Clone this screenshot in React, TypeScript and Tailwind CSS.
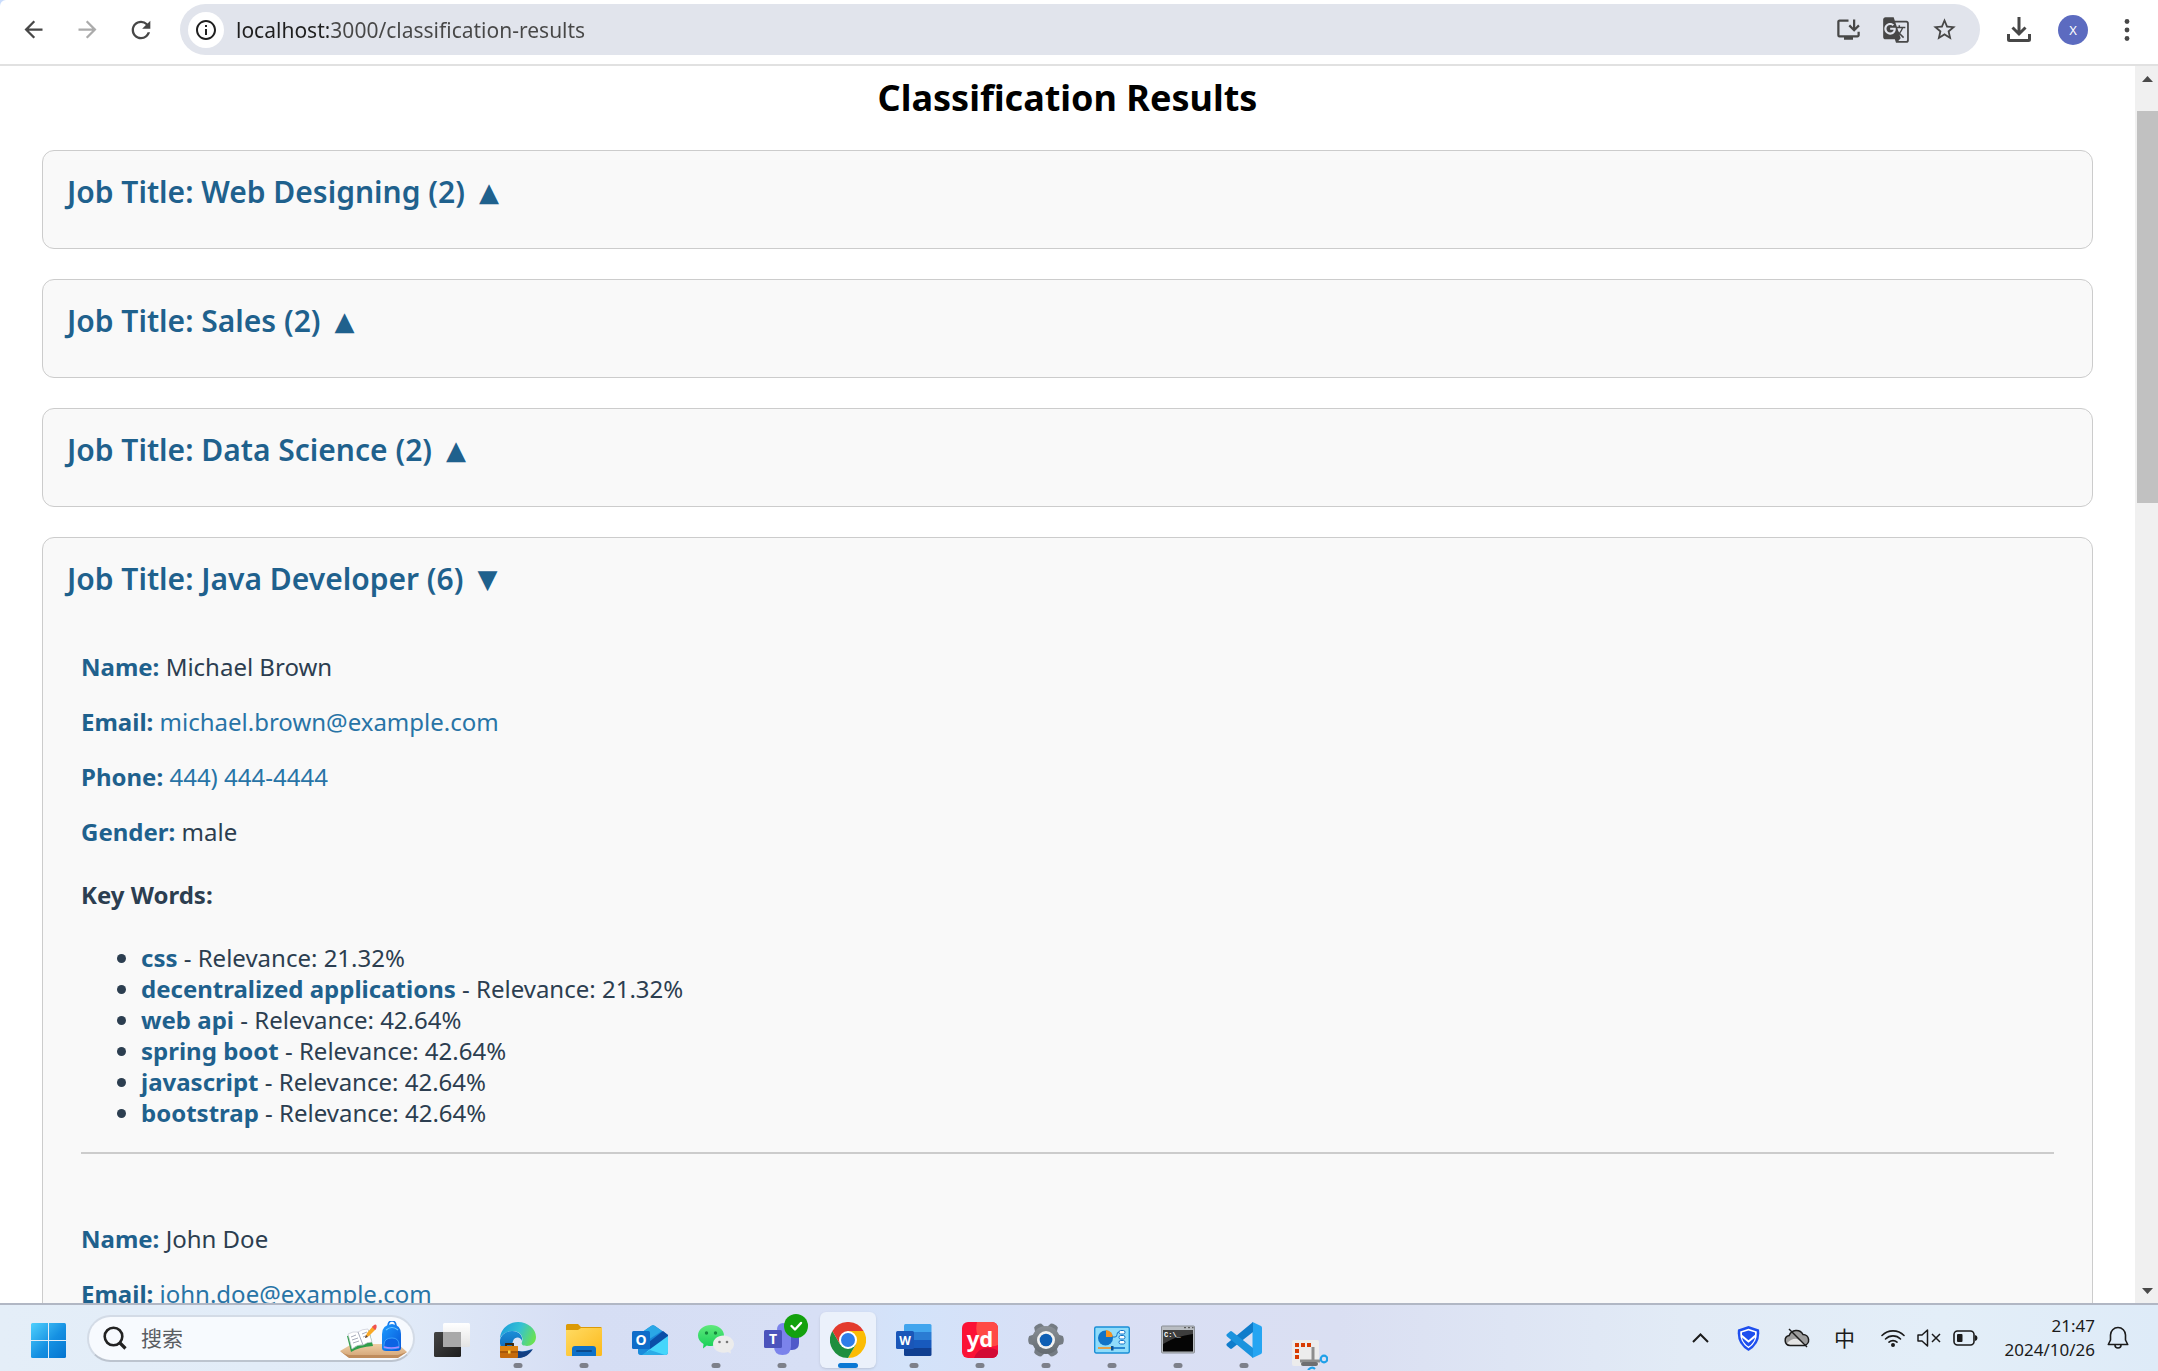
import { useState, type ReactNode } from "react";
import {
  MdArrowBack,
  MdArrowForward,
  MdGTranslate,
  MdInfoOutline,
  MdInstallDesktop,
  MdRefresh,
  MdStarBorder,
} from "react-icons/md";

type Keyword = { word: string; relevance: string };
type Candidate = {
  name: string;
  email: string;
  phone: string;
  gender: string;
  keywords: Keyword[];
};
type Group = { title: string; count: number; candidates: Candidate[] };

const groups: Group[] = [
  { title: "Web Designing", count: 2, candidates: [] },
  { title: "Sales", count: 2, candidates: [] },
  { title: "Data Science", count: 2, candidates: [] },
  {
    title: "Java Developer",
    count: 6,
    candidates: [
      {
        name: "Michael Brown",
        email: "michael.brown@example.com",
        phone: "444) 444-4444",
        gender: "male",
        keywords: [
          { word: "css", relevance: "21.32%" },
          { word: "decentralized applications", relevance: "21.32%" },
          { word: "web api", relevance: "42.64%" },
          { word: "spring boot", relevance: "42.64%" },
          { word: "javascript", relevance: "42.64%" },
          { word: "bootstrap", relevance: "42.64%" },
        ],
      },
      {
        name: "John Doe",
        email: "john.doe@example.com",
        phone: "",
        gender: "",
        keywords: [],
      },
    ],
  },
];

/* ---------- Browser toolbar ---------- */

function IconButton({ label, className = "", children }: { label: string; className?: string; children: ReactNode }) {
  return (
    <button
      type="button"
      aria-label={label}
      className={`flex shrink-0 items-center justify-center ${className}`}
    >
      {children}
    </button>
  );
}

function BrowserBar() {
  return (
    <header className="shrink-0 border-b-2 border-[#e1e1e1] bg-[#c9dcfc]">
      <div className="flex h-16 items-center rounded-tl-md bg-white pt-1 pb-[9px] pl-[6px]">
        <IconButton label="Back" className="h-[51px] w-[54px] text-[#474747]">
          <MdArrowBack size={27} />
        </IconButton>
        <IconButton label="Forward" className="h-[51px] w-[54px] text-[#ababab]">
          <MdArrowForward size={27} />
        </IconButton>
        <IconButton label="Reload" className="h-[51px] w-[54px] text-[#474747]">
          <MdRefresh size={28} />
        </IconButton>
        <div className="ml-3 flex h-[51px] min-w-0 flex-1 items-center rounded-full bg-[#e1e4ec] pr-3 pl-2">
          <IconButton label="View site information" className="size-9 rounded-full bg-white text-[#1f1f1f]">
            <MdInfoOutline size={24} />
          </IconButton>
          <input
            type="text"
            aria-label="Address"
            defaultValue="localhost:3000/classification-results"
            className="ml-3 min-w-0 flex-1 bg-[linear-gradient(90deg,#1f1f1f_92px,#474747_92px)] bg-clip-text text-[21px] leading-8 text-transparent caret-black outline-none"
          />
          <IconButton label="Install app" className="h-9 w-12 text-[#474747]">
            <MdInstallDesktop size={27} />
          </IconButton>
          <IconButton label="Translate this page" className="h-9 w-12 text-[#474747]">
            <MdGTranslate size={28} />
          </IconButton>
          <IconButton label="Bookmark this page" className="h-9 w-12 text-[#474747]">
            <MdStarBorder size={27} />
          </IconButton>
        </div>
        <IconButton label="Downloads" className="ml-3 h-9 w-[54px] text-[#474747]">
          <svg width="24" height="25" viewBox="0 0 24 25" fill="none" stroke="currentColor" strokeWidth="3">
            <path d="M12 0v16M5.500 10.500 12 17l6.500-6.500" />
            <path d="M1.500 17v5.500a1 1 0 0 0 1 1h19a1 1 0 0 0 1-1V17" />
          </svg>
        </IconButton>
        <IconButton label="Profile" className="h-9 w-[54px]">
          <span className="flex size-[30px] items-center justify-center rounded-full bg-[#5c6bc0] text-[13px] leading-4 text-white">
            X
          </span>
        </IconButton>
        <IconButton label="Browser menu" className="mr-1 h-9 w-[54px] text-[#474747]">
          <svg width="6" height="24" viewBox="0 0 6 24" fill="currentColor">
            <circle cx="3" cy="3.500" r="2.400" />
            <circle cx="3" cy="12" r="2.400" />
            <circle cx="3" cy="20.500" r="2.400" />
          </svg>
        </IconButton>
      </div>
    </header>
  );
}

/* ---------- Page ---------- */

function CandidateDetails({ c }: { c: Candidate }) {
  return (
    <article className="mt-[52px] px-[14px] text-2xl leading-[31px] text-[#2c3e50]">
      <div className="flex flex-col gap-6">
        <p>
          <strong className="text-[#1f618d]">Name:</strong> {c.name}
        </p>
        <p>
          <strong className="text-[#1f618d]">Email:</strong>{" "}
          <a href={`mailto:${c.email}`} className="text-[#2874a6]">
            {c.email}
          </a>
        </p>
        {c.phone && (
          <p>
            <strong className="text-[#1f618d]">Phone:</strong>{" "}
            <a href={`tel:${c.phone}`} className="text-[#2874a6]">
              {c.phone}
            </a>
          </p>
        )}
        {c.gender && (
          <p>
            <strong className="text-[#1f618d]">Gender:</strong> {c.gender}
          </p>
        )}
      </div>
      {c.keywords.length > 0 && (
        <>
          <h3 className="my-8 font-bold">Key Words:</h3>
          <ul className="list-disc pl-[60px]">
            {c.keywords.map((k) => (
              <li key={k.word}>
                <strong className="text-[#1f618d]">{k.word}</strong> - Relevance: {k.relevance}
              </li>
            ))}
          </ul>
        </>
      )}
      <hr className="mt-6 mb-[69px] border-t-2 border-[#cccccc]" />
    </article>
  );
}

function JobGroup({ group, initiallyOpen }: { group: Group; initiallyOpen: boolean }) {
  const [open, setOpen] = useState(initiallyOpen);
  return (
    <section className="rounded-xl border border-[#cccccc] bg-[#f9f9f9] px-6 pt-[21px] pb-9">
      <h2 className="text-3xl leading-10 font-semibold text-[#1f618d]">
        <button
          type="button"
          aria-expanded={open}
          onClick={() => setOpen(!open)}
          className="flex items-center gap-[14px] text-left"
        >
          <span>
            Job Title: {group.title} ({group.count})
          </span>
          <span className="font-['DejaVu_Sans',sans-serif] text-[26px] leading-8 font-normal">
            {open ? "▼" : "▲"}
          </span>
        </button>
      </h2>
      {open && group.candidates.map((c) => <CandidateDetails key={c.name} c={c} />)}
    </section>
  );
}

function ScrollBar() {
  return (
    <div className="flex w-[23px] shrink-0 flex-col items-center bg-[#f0f0f0] pt-[10px] pb-[9px] pl-[2px]">
      <svg width="11" height="6" viewBox="0 0 11 6" fill="#4a4a4a">
        <path d="M5.500 0 11 6H0Z" />
      </svg>
      <div className="mt-[29px] mb-auto h-[392px] w-full bg-[#c1c1c1]" />
      <svg width="11" height="6" viewBox="0 0 11 6" fill="#4a4a4a">
        <path d="M5.500 6 11 0H0Z" />
      </svg>
    </div>
  );
}

/* ---------- Taskbar icons ---------- */

function StartIcon() {
  return (
    <svg width="35" height="35" viewBox="0 0 35 35">
      <defs>
        <linearGradient id="win" x1="0" y1="0" x2="35" y2="35" gradientUnits="userSpaceOnUse">
          <stop offset="0" stopColor="#4fd0fd" />
          <stop offset=".55" stopColor="#1590e2" />
          <stop offset="1" stopColor="#0474cf" />
        </linearGradient>
      </defs>
      <g fill="url(#win)">
        <path d="M1.500 0H17v17H0V1.500A1.500 1.500 0 0 1 1.500 0Z" />
        <path d="M18 0h15.500A1.500 1.500 0 0 1 35 1.500V17H18Z" />
        <path d="M0 18h17v17H1.500A1.500 1.500 0 0 1 0 33.500Z" />
        <path d="M18 18h17v15.500a1.500 1.500 0 0 1-1.500 1.500H18Z" />
      </g>
    </svg>
  );
}

function SearchArt() {
  return (
    <svg width="67" height="38" viewBox="0 0 67 38" className="mt-[3px]">
      <defs>
        <linearGradient id="bag" x1="0" y1="0" x2="1" y2="1">
          <stop offset="0" stopColor="#1d9bff" />
          <stop offset="1" stopColor="#0756d8" />
        </linearGradient>
        <linearGradient id="table" x1="0" y1="0" x2="0" y2="1">
          <stop offset="0" stopColor="#efcfa6" />
          <stop offset="1" stopColor="#d3a476" />
        </linearGradient>
      </defs>
      <path d="M0 30 12 23h46l9 8-9 5H8Z" fill="url(#table)" />
      <path d="M0 30q4 3 9 4h49l9-3-9 6H9Z" fill="#bf8c5c" />
      <path d="m7 15 4 16q8-5 22-6l-4-16Z" fill="#2f9e4a" />
      <path d="m8 13 4 15q6-5 11-4 4-3 9-3L28 8q-6 0-10 3-5-1-10 2Z" fill="#fff" stroke="#c5c9d4" strokeWidth=".7" />
      <path d="m18 11 5 13M11 16l5-2M12 19l6-2M13 22l6-2M22 13l5-2M23 16l5-2" stroke="#8f96a8" strokeWidth=".8" fill="none" />
      <path d="m25 17 2-5 6-7 3 3-7 7Z" fill="#f9a825" />
      <path d="m25 17 1-3 2 2Z" fill="#5d4037" />
      <path d="m32 6 2-2q2-1 2.500.500T36 8l-1 1Z" fill="#ef5350" />
      <path d="M48 6q0-6 4-6t4 6" fill="none" stroke="#1277e8" strokeWidth="1.600" />
      <path d="M42 13q0-9 10-10 9 1 9 10v14q0 3-4 3H46q-4 0-4-3Z" fill="url(#bag)" />
      <path d="M46 9q6-5 12 0" stroke="#68c6ff" strokeWidth="1.200" fill="none" />
      <path d="M44 24q0-7 8-7 7 0 7 7v3q-7 2-15 0Z" fill="#0c63e4" stroke="#4cb2ff" strokeWidth=".7" />
      <path d="M44 26q7 2 15 0" stroke="#a98bff" strokeWidth="1.600" fill="none" />
    </svg>
  );
}

function TaskViewIcon() {
  return (
    <svg width="36" height="36" viewBox="0 0 36 36">
      <defs>
        <linearGradient id="tvd" x1="0" y1="0" x2="1" y2="1">
          <stop offset="0" stopColor="#444" />
          <stop offset="1" stopColor="#1e1e1e" />
        </linearGradient>
        <linearGradient id="tvl" x1="0" y1="0" x2="0" y2="1">
          <stop offset="0" stopColor="#fff" />
          <stop offset="1" stopColor="#e4e4e4" />
        </linearGradient>
      </defs>
      <rect x="0" y="10" width="27" height="25" rx="1.500" fill="url(#tvd)" />
      <rect x="9" y="1" width="27" height="24" rx="1.500" fill="url(#tvl)" />
      <path d="M9 10h18v15H10.500A1.500 1.500 0 0 1 9 23.500Z" fill="#a9a9a9" />
    </svg>
  );
}

function EdgeIcon() {
  return (
    <svg width="36" height="36" viewBox="0 0 36 36">
      <defs>
        <linearGradient id="edgeTop" x1="0" y1=".3" x2="1" y2=".6">
          <stop offset="0" stopColor="#1c9fdc" />
          <stop offset=".5" stopColor="#35c1d3" />
          <stop offset="1" stopColor="#6be24f" />
        </linearGradient>
        <linearGradient id="edgeMid" x1="0" y1="0" x2="0" y2="1">
          <stop offset="0" stopColor="#1b8fd8" />
          <stop offset="1" stopColor="#0c56a8" />
        </linearGradient>
      </defs>
      <path d="M0 17C0 8 8 0 18 0s18 7 18 15c0 6-5 9-9 9-5 0-6-2-5-4 2-5-2-11-9-11C6 9 1 13 0 17Z" fill="url(#edgeTop)" />
      <path d="M0 18c1-5 6-9 12-9 7 0 11 5 10 10-1-4-7-5-9 0-3 8 5 14 19 8-3 5-8 9-14 9C7 36-1 28 0 18Z" fill="url(#edgeMid)" />
      <path d="M13 21c-1 7 8 12 20 6-3 5-8 9-15 9Z" fill="#123f83" />
      <path d="M6 24v-2h7v2" fill="none" stroke="#3b2508" strokeWidth="1.800" />
      <rect x="0" y="24" width="18" height="12" rx="1" fill="#c56a0b" />
      <path d="M0 25a1 1 0 0 1 1-1h16a1 1 0 0 1 1 1v4H0Z" fill="#dd8312" />
      <path d="M0 30h18" stroke="#8a4706" strokeWidth="1" />
      <rect x="8" y="28.500" width="2.500" height="3" fill="#ffd84a" />
    </svg>
  );
}

function FolderIcon() {
  return (
    <svg width="36" height="36" viewBox="0 0 36 36">
      <defs>
        <linearGradient id="fold" x1="0" y1="0" x2="1" y2="1">
          <stop offset="0" stopColor="#ffdb63" />
          <stop offset="1" stopColor="#fcb91b" />
        </linearGradient>
      </defs>
      <path d="M0 3.500A1.500 1.500 0 0 1 1.500 2H12l3 3h19.500A1.500 1.500 0 0 1 36 6.500V12H0Z" fill="#dc9a06" />
      <path d="M0 8h12l3-2h21v26.500a1.500 1.500 0 0 1-1.500 1.500h-33A1.500 1.500 0 0 1 0 32.500Z" fill="url(#fold)" />
      <path d="M6 34v-7a3 3 0 0 1 3-3h18a3 3 0 0 1 3 3v7Z" fill="#0e71c8" />
      <path d="M11 29h14" stroke="#0a4a8c" strokeWidth="2" strokeLinecap="round" />
    </svg>
  );
}

function OutlookIcon() {
  return (
    <svg width="36" height="36" viewBox="0 0 36 36">
      <path d="m6 13 13-9q2-1.500 4 0l13 9v17q0 3-3 3H9q-3 0-3-3Z" fill="#1a86d8" />
      <path d="m6 13 13-9q2-1.500 4 0l7 5-22 14Z" fill="#2aa7e6" />
      <path d="m17 20 14-11 5 4v4L18 29Z" fill="#0b4fa8" />
      <path d="M36 14v16q0 3-3 3H10Z" fill="#45d6fb" />
      <path d="m6 22 9 8 3-2 15 5H9q-3 0-3-3Z" fill="#1b8fdc" opacity=".6" />
      <rect x="0" y="9" width="18" height="18" rx="1.500" fill="#0f6cc9" />
      <text x="9" y="23" textAnchor="middle" fontSize="14" fontWeight="700" fill="#fff">
        O
      </text>
    </svg>
  );
}

function WeChatIcon() {
  return (
    <svg width="36" height="36" viewBox="0 0 36 36">
      <defs>
        <linearGradient id="wx" x1="0" y1="0" x2="0" y2="1">
          <stop offset="0" stopColor="#5fe87b" />
          <stop offset="1" stopColor="#14cf57" />
        </linearGradient>
      </defs>
      <path d="M13 3c7 0 13 4.500 13 10.500S20 24 13 24c-1.500 0-3-.2-4.200-.6L5 26.500l.5-4.500C2 20 0 17 0 13.500 0 7.500 6 3 13 3Z" fill="url(#wx)" />
      <circle cx="8.500" cy="11" r="1.700" fill="#148a3d" />
      <circle cx="17.500" cy="11" r="1.700" fill="#148a3d" />
      <path d="M25.500 13.500c6 0 10.500 4 10.500 8.700 0 2.500-1.400 4.800-3.500 6.400l.4 3-3-1.700c-1.300.4-2.800.8-4.400.8-6 0-10.500-3.800-10.500-8.500s4.500-8.700 10.500-8.700Z" fill="#ececec" />
      <circle cx="21.500" cy="20" r="1.300" fill="#777" />
      <circle cx="29" cy="20" r="1.300" fill="#777" />
    </svg>
  );
}

function TeamsIcon() {
  return (
    <svg width="44" height="44" viewBox="0 0 44 44" className="-mt-2 ml-2">
      <circle cx="19" cy="15" r="6" fill="#7b83eb" />
      <path d="M24 18h11v11q0 7-7 7h-4Z" fill="#5059c9" />
      <path d="M10 19h17v13q0 9-8.500 9T10 32Z" fill="#7b83eb" />
      <rect x="0" y="16" width="18" height="18" rx="1.500" fill="#4b53bc" />
      <text x="9" y="30" textAnchor="middle" fontSize="14" fontWeight="700" fill="#fff">
        T
      </text>
      <circle cx="32" cy="12" r="12" fill="#13a10e" />
      <path d="m27.500 12 3.500 3.500 6-6.500" fill="none" stroke="#fff" strokeWidth="2.400" strokeLinecap="round" strokeLinejoin="round" />
    </svg>
  );
}

function ChromeIcon() {
  return (
    <svg width="36" height="36" viewBox="0 0 36 36">
      <path d="M18 9h15.600A18 18 0 0 1 18 36l7.800-13.500Z" fill="#fbbc04" />
      <path d="M2.400 9A18 18 0 0 0 18 36l7.800-13.500H10.200Z" fill="#1e8e3e" />
      <path d="M2.400 9A18 18 0 0 1 33.600 9H18l-7.800 13.500Z" fill="#e33b2e" />
      <circle cx="18" cy="18" r="9" fill="#fff" />
      <circle cx="18" cy="18" r="7" fill="#2f7de9" />
    </svg>
  );
}

function WordIcon() {
  return (
    <svg width="36" height="36" viewBox="0 0 36 36">
      <path d="M8 3.500A1.500 1.500 0 0 1 9.500 2h24.500A1.500 1.500 0 0 1 35.500 3.500V10H8Z" fill="#41a5ee" />
      <path d="M8 10h27.500v8H8Z" fill="#2b7cd3" />
      <path d="M8 18h27.500v8H8Z" fill="#185abd" />
      <path d="M8 26h27.500v6.500A1.500 1.500 0 0 1 34 34H9.500A1.500 1.500 0 0 1 8 32.500Z" fill="#103f91" />
      <rect x="0" y="9" width="18" height="18" rx="1.500" fill="#1a56b8" />
      <text x="9" y="22.500" textAnchor="middle" fontSize="12" fontWeight="700" fill="#fff">
        W
      </text>
    </svg>
  );
}

function YoudaoIcon() {
  return (
    <svg width="36" height="36" viewBox="0 0 36 36">
      <rect width="36" height="36" rx="6" fill="#fb1236" />
      <path d="M15 0h15a6 6 0 0 1 6 6v17Q30 26 22 22 12 14 15 0Z" fill="#ff4a45" />
      <path d="M12 36q4-10 13-10 8 0 11 3v1a6 6 0 0 1-6 6Z" fill="#d20a35" />
      <text x="18" y="25" textAnchor="middle" fontSize="22" fontWeight="700" fill="#fff">
        yd
      </text>
    </svg>
  );
}

function SettingsIcon() {
  const teeth = [30, 90, 150, 210, 270, 330];
  return (
    <svg width="36" height="36" viewBox="0 0 36 36">
      <defs>
        <linearGradient id="gear" x1="0" y1="0" x2="0" y2="1">
          <stop offset="0" stopColor="#8a9096" />
          <stop offset="1" stopColor="#636a70" />
        </linearGradient>
      </defs>
      <g fill="#757c83">
        {teeth.map((a) => (
          <path key={a} d="M12.500 6 14 1.200Q18-.8 22 1.200L23.500 6Z" transform={`rotate(${a} 18 18)`} />
        ))}
      </g>
      <circle cx="18" cy="18" r="14" fill="url(#gear)" />
      <circle cx="18" cy="18" r="9" fill="#f2f2f2" />
      <circle cx="18" cy="18" r="6.300" fill="#0f5fb4" />
    </svg>
  );
}

function ControlPanelIcon() {
  return (
    <svg width="36" height="36" viewBox="0 0 36 36">
      <rect x=".7" y="5" width="34.600" height="26" rx="1.500" fill="#8fdcfa" stroke="#1a8fd6" strokeWidth="1.400" />
      <circle cx="11.500" cy="16" r="7.500" fill="#1173c7" />
      <path d="M12 15V8a7.500 7.500 0 0 1 7 7Z" fill="#f7931e" />
      <path d="M18 15h3q2 0 2-2.500T25 10" fill="none" stroke="#1173c7" strokeWidth="1" />
      <g fill="#fff" stroke="#1173c7" strokeWidth="1">
        <rect x="25" y="8.500" width="6" height="3.500" rx="1.700" />
        <rect x="25" y="13.500" width="6" height="3.500" rx="1.700" />
        <rect x="25" y="18.500" width="6" height="3.500" rx="1.700" />
      </g>
      <path d="M4 26h14" stroke="#f7931e" strokeWidth="1.600" />
      <path d="M18 26h13" stroke="#1173c7" strokeWidth="1.600" />
      <rect x="17" y="24" width="2.500" height="4.500" fill="#0b5394" />
    </svg>
  );
}

function TerminalIcon() {
  return (
    <svg width="36" height="36" viewBox="0 0 36 36">
      <rect x="1.500" y="4" width="33" height="27" rx="1" fill="#b9bdc2" stroke="#8b9096" strokeWidth="1" />
      <path d="M24 5.700h2M28 5.700h2M32 5.700h1.500" stroke="#444" strokeWidth="1" />
      <rect x="3" y="8" width="30" height="21.500" fill="#050505" />
      <path d="M3 8h30v4Q16 14 3 22Z" fill="#3d3d3d" />
      <text x="4" y="15" fontSize="7" fontWeight="700" fill="#fff" className="font-['Liberation_Mono',monospace]">
        C:\_
      </text>
    </svg>
  );
}

function VsCodeIcon() {
  return (
    <svg width="36" height="36" viewBox="0 0 36 36">
      <path d="M26.500 0 35 4q1 .5 1 2v24q0 1.500-1 2l-8.500 4Z" fill="#25a5f2" />
      <path d="M27 0v10L6 26.500q-1 .8-2 0l-3-2.600q-1.200-1.200 0-2.300Z" fill="#0f7ccb" />
      <path d="M27 36V26L6 9.500q-1-.8-2 0l-3 2.600q-1.200 1.200 0 2.300Z" fill="#1a93de" />
    </svg>
  );
}

function SnipIcon() {
  return (
    <svg width="36" height="30" viewBox="0 0 36 30">
      <rect x="0" y="0" width="27" height="26" rx="2" fill="#ececec" />
      <path d="M3 5h17" stroke="#d83b01" strokeWidth="4" strokeDasharray="4 2" />
      <path d="M5 9v12" stroke="#d83b01" strokeWidth="4" strokeDasharray="4 2" />
      <path d="M21 7v14M8 21h20" stroke="#8d8d8d" strokeWidth="3" fill="none" />
      <rect x="9" y="22" width="17" height="4" rx="2" fill="#6e6e70" />
      <circle cx="32" cy="19" r="3.300" fill="none" stroke="#1fa0e8" strokeWidth="2.200" />
      <path d="M16 30q4-4 7-1" fill="none" stroke="#1fa0e8" strokeWidth="2.200" />
    </svg>
  );
}

type TaskbarApp = { name: string; icon: ReactNode; running?: boolean; active?: boolean };

const apps: TaskbarApp[] = [
  { name: "Task View", icon: <TaskViewIcon /> },
  { name: "Edge", icon: <EdgeIcon />, running: true },
  { name: "File Explorer", icon: <FolderIcon />, running: true },
  { name: "Outlook", icon: <OutlookIcon /> },
  { name: "WeChat", icon: <WeChatIcon />, running: true },
  { name: "Teams", icon: <TeamsIcon />, running: true },
  { name: "Chrome", icon: <ChromeIcon />, running: true, active: true },
  { name: "Word", icon: <WordIcon />, running: true },
  { name: "Youdao Dictionary", icon: <YoudaoIcon />, running: true },
  { name: "Settings", icon: <SettingsIcon />, running: true },
  { name: "Control Panel", icon: <ControlPanelIcon />, running: true },
  { name: "Command Prompt", icon: <TerminalIcon />, running: true },
  { name: "Visual Studio Code", icon: <VsCodeIcon />, running: true },
];

function TaskButton({ app }: { app: TaskbarApp }) {
  return (
    <button
      type="button"
      aria-label={app.name}
      className={`relative mx-[5px] flex size-14 shrink-0 items-center justify-center rounded-md ${
        app.active ? "bg-[#ebf1fb] shadow-sm" : ""
      }`}
    >
      {app.icon}
      {app.running && (
        <span
          className={`absolute bottom-0 left-1/2 h-[5px] -translate-x-1/2 rounded-full ${
            app.active ? "w-5 bg-[#0a78d4]" : "w-[9px] bg-[#7d808a]"
          }`}
        />
      )}
    </button>
  );
}

function Tray() {
  return (
    <div className="ml-auto flex items-center pr-[29px] text-[#1b1b1b]">
      <IconButton label="Show hidden icons" className="h-12 w-12">
        <svg width="17" height="10" viewBox="0 0 17 10" fill="none" stroke="currentColor" strokeWidth="2">
          <path d="m1 9 7.500-7.500L16 9" />
        </svg>
      </IconButton>
      <IconButton label="Security" className="h-12 w-12">
        <svg width="23" height="25" viewBox="0 0 23 25">
          <path d="M11.500 0 22 3.500Q24 18 11.500 25-1 18 1 3.500Z" fill="#1f4fee" />
          <path d="M11.500 2.800 19.800 5.500Q20.500 16.500 11.500 22.300 2.500 16.500 3.200 5.500Z" fill="#fff" />
          <path d="M11.500 4.500 18 6.600v2.200l-6.500 5.400L5 8.800V6.600Z" fill="#1f4fee" />
          <path d="M5 11.500l6.500 5.300 6.500-5.300q-.8 5.300-6.500 9-5.700-3.700-6.500-9Z" fill="#1f4fee" />
        </svg>
      </IconButton>
      <IconButton label="Cloud sync off" className="h-12 w-12">
        <svg width="26" height="20" viewBox="0 0 26 20">
          <path d="M6 17.500a5 5 0 0 1-.8-9.900A7.500 7.500 0 0 1 19 6.500a5.600 5.600 0 0 1 1.500 11Z" fill="#9d9d9d" />
          <path d="M2 16q6-6 11-5 5 2 9 6H6Z" fill="#e4e4e4" />
          <path d="M6 17.500a5 5 0 0 1-.8-9.900A7.500 7.500 0 0 1 19 6.500a5.600 5.600 0 0 1 1.500 11Z" fill="none" stroke="#1b1b1b" strokeWidth="1.500" />
          <path d="m5 1 18 18" stroke="#1b1b1b" strokeWidth="1.500" />
        </svg>
      </IconButton>
      <button type="button" aria-label="Input method" className="h-12 w-12 text-[21px] leading-8">
        中
      </button>
      <IconButton label="Network, sound and battery" className="ml-3 h-12 gap-3">
        <svg width="24" height="18" viewBox="0 0 24 18" fill="none" stroke="currentColor" strokeWidth="1.600" strokeLinecap="round">
          <path d="M1 6.500a15.500 15.500 0 0 1 22 0" />
          <path d="M4.500 10a10.500 10.500 0 0 1 15 0" />
          <path d="M8 13.200a5.800 5.800 0 0 1 8 0" />
          <circle cx="12" cy="16" r="1.200" fill="currentColor" />
        </svg>
        <svg width="24" height="18" viewBox="0 0 24 18" fill="none" stroke="currentColor" strokeWidth="1.500" strokeLinejoin="round">
          <path d="M1 6v6h4l5.500 5V1L5 6Z" />
          <path d="m15 5 8 8M23 5l-8 8" />
        </svg>
        <svg width="25" height="16" viewBox="0 0 25 16" fill="none" stroke="currentColor" strokeWidth="1.600">
          <rect x="1" y="1" width="20" height="14" rx="3.500" />
          <rect x="4" y="4" width="5.500" height="8" rx="1" fill="currentColor" stroke="none" />
          <path d="M22 5v6q2.500-.5 2.500-3T22 5Z" fill="currentColor" stroke="none" />
        </svg>
      </IconButton>
      <button type="button" className="ml-[27px] text-right text-[17px] leading-6">
        21:47
        <br />
        2024/10/26
      </button>
      <IconButton label="Notifications" className="ml-3 h-12">
        <svg width="22" height="24" viewBox="0 0 22 24" fill="none" stroke="currentColor" strokeWidth="1.600" strokeLinejoin="round">
          <path d="M3.500 14V9a7.500 7.500 0 0 1 15 0v5l2.200 4.500H1.300Z" />
          <path d="M8 19q0 3 3 3t3-3" />
        </svg>
      </IconButton>
    </div>
  );
}

function Taskbar() {
  return (
    <footer className="relative flex h-[68px] shrink-0 items-center overflow-hidden border-t-2 border-[#b1b7c4] bg-[linear-gradient(90deg,#e4eef8_0%,#e1ebf8_18%,#d6def4_27%,#d7dff5_38%,#d3e3fa_42%,#d9dff5_50%,#dadff2_62%,#e2ebf6_78%,#e3eef8_90%,#deebf8_100%)] pl-5">
      <IconButton label="Start" className="size-14 pt-1">
        <StartIcon />
      </IconButton>
      <div className="ml-[11px] flex h-[47px] w-[328px] shrink-0 items-center rounded-full border-2 border-[#d3dbe6] border-b-[#bcc4cf] bg-[#f7fafe] pr-[6px] pl-[14px]">
        <svg width="24" height="24" viewBox="0 0 24 24" fill="none" stroke="#222" strokeWidth="2.600">
          <circle cx="10.500" cy="10.500" r="8.800" />
          <path d="m16.500 16.500 6 6" strokeWidth="3.200" />
        </svg>
        <input
          type="search"
          aria-label="搜索"
          placeholder="搜索"
          className="ml-[14px] min-w-0 flex-1 text-[21px] leading-8 outline-none placeholder:text-[#5a5d62]"
        />
        <SearchArt />
      </div>
      <nav aria-label="Apps" className="ml-1 flex items-center pt-1">
        {apps.map((a) => (
          <TaskButton key={a.name} app={a} />
        ))}
        <button type="button" aria-label="Snipping Tool" className="ml-[15px] h-14 shrink-0 self-end pt-[28px]">
          <SnipIcon />
        </button>
      </nav>
      <Tray />
    </footer>
  );
}

export default function App() {
  return (
    <div className="flex h-screen flex-col overflow-hidden bg-white font-['Noto_Sans','Noto_Sans_CJK_SC',sans-serif]">
      <BrowserBar />
      <div className="flex min-h-0 flex-1">
        <main className="min-w-0 flex-1 overflow-hidden px-[42px] pt-2">
          <h1 className="text-center text-4xl leading-[48px] font-bold text-black">Classification Results</h1>
          <div className="mt-7 flex flex-col gap-[30px]">
            {groups.map((g) => (
              <JobGroup key={g.title} group={g} initiallyOpen={g.candidates.length > 0} />
            ))}
          </div>
        </main>
        <ScrollBar />
      </div>
      <Taskbar />
    </div>
  );
}
